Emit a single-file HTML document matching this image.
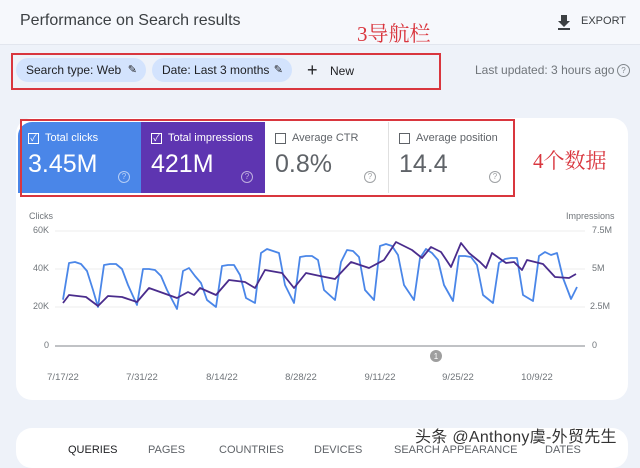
<!DOCTYPE html>
<html><head><meta charset="utf-8"><style>
body{margin:0;width:640px;height:455px;overflow:hidden;background:#eef2f9;font-family:"Liberation Sans","Noto Sans CJK SC",sans-serif;position:relative}
.a{position:absolute;white-space:nowrap}
.hdr{position:absolute;left:0;top:0;width:640px;height:44px;background:#f6f8fc;border-bottom:1px solid #e2e6ee}
.chip{position:absolute;top:58px;height:24px;border-radius:12px;background:#d3e3fd;font-size:12px;color:#202124;line-height:24px;padding-left:10px;box-sizing:border-box}
.card{position:absolute;background:#fff;border-radius:16px}
.tile{position:absolute;top:122px;height:71px;width:124px;box-sizing:border-box;padding:10px 0 0 10px}
.tile .l{font-size:11px;display:flex;align-items:center}
.cb{width:9px;height:9px;border:1px solid currentColor;margin-right:6px;display:inline-block;font-size:9px;line-height:9px;text-align:center}
.tile .n{font-size:25px;margin-top:6px}
.q{position:absolute;right:12px;bottom:10px;width:10px;height:10px;border:1px solid currentColor;border-radius:50%;font-size:8px;line-height:10px;text-align:center;opacity:.6}
.red{color:#d9363e;font-family:"Liberation Serif","Noto Serif CJK SC",serif}
.ax{font-size:9px;color:#70757a}
.tab{position:absolute;top:444px;font-size:11px;color:#5f6368}
</style></head><body>
<div class="hdr"></div>
<div class="a" style="left:20px;top:12px;font-size:16px;color:#3c4043">Performance on Search results</div>
<div class="a red" style="left:357px;top:18px;font-size:21px">3导航栏</div>
<svg class="a" style="left:557px;top:14px" width="14" height="16"><path d="M4 1h6v6h3l-6 6-6-6h3z" fill="#3c4043"/><rect x="1" y="14" width="12" height="2" fill="#3c4043"/></svg>
<div class="a" style="left:581px;top:15px;font-size:11px;color:#3c4043">EXPORT</div>

<div class="chip" style="left:16px;width:130px">Search type: Web <span style="position:absolute;right:9px;font-size:11px">✎</span></div>
<div class="chip" style="left:152px;width:140px">Date: Last 3 months <span style="position:absolute;right:9px;font-size:11px">✎</span></div>
<div class="a" style="left:307px;top:60px;font-size:18px;color:#202124">+</div>
<div class="a" style="left:330px;top:64px;font-size:12px;color:#202124">New</div>
<div class="a" style="left:11px;top:53px;width:426px;height:33px;border:2px solid #d9363e"></div>
<div class="a" style="left:475px;top:63px;font-size:12px;color:#70757a">Last updated: 3 hours ago</div>
<div class="a" style="left:617px;top:64px;width:11px;height:11px;border:1px solid #80868b;border-radius:50%;font-size:8px;line-height:11px;text-align:center;color:#80868b">?</div>

<div class="card" style="left:16px;top:118px;width:612px;height:282px"></div>
<div class="tile" style="left:18px;background:#4a86e8;color:#fff;border-top-left-radius:14px"><div class="l"><span class="cb">✓</span>Total clicks</div><div class="n">3.45M</div><div class="q">?</div></div>
<div class="tile" style="left:141px;background:#5e35b1;color:#fff"><div class="l"><span class="cb">✓</span>Total impressions</div><div class="n">421M</div><div class="q">?</div></div>
<div class="tile" style="left:265px;color:#5f6368;border-right:1px solid #e0e0e0"><div class="l"><span class="cb"></span>Average CTR</div><div class="n">0.8%</div><div class="q">?</div></div>
<div class="tile" style="left:389px;color:#5f6368"><div class="l"><span class="cb"></span>Average position</div><div class="n">14.4</div><div class="q">?</div></div>
<div class="a" style="left:20px;top:119px;width:491px;height:74px;border:2px solid #d9363e"></div>
<div class="a red" style="left:533px;top:145px;font-size:21px">4个数据</div>

<div class="a ax" style="left:29px;top:211px">Clicks</div>
<div class="a ax" style="left:566px;top:211px">Impressions</div>
<div class="a ax" style="left:33px;top:225px">60K</div>
<div class="a ax" style="left:33px;top:263px">40K</div>
<div class="a ax" style="left:33px;top:301px">20K</div>
<div class="a ax" style="left:44px;top:340px">0</div>
<div class="a ax" style="left:592px;top:225px">7.5M</div>
<div class="a ax" style="left:592px;top:263px">5M</div>
<div class="a ax" style="left:590px;top:301px">2.5M</div>
<div class="a ax" style="left:592px;top:340px">0</div>
<svg class="a" style="left:0;top:0" width="640" height="455">
<g stroke="#eeeeee" stroke-width="1"><line x1="55" y1="231" x2="585" y2="231"/><line x1="55" y1="269" x2="585" y2="269"/><line x1="55" y1="307" x2="585" y2="307"/></g>
<line x1="55" y1="346" x2="585" y2="346" stroke="#80868b" stroke-width="1"/>
<polyline fill="none" stroke="#4a86e8" stroke-width="1.8" stroke-linejoin="round" points="63,299.7 69,263 75,262 81,264 87,271 93,290 98,307 104,265 110,264 116,264 122,269 128,285 137,305 143,269 149,269 155,270 161,276 167,290 177,309 183,271 189,268 195,276 201,283 207,300 216,307 222,266 228,265 234,265 240,275 246,298 255,303 261,253 267,249 273,251 279,253 285,285 294,303 300,257 306,256 312,256 318,260 324,290 335,300 341,262 347,250 353,251 359,257 365,290 374,300 380,246 386,244 392,246 398,255 404,285 414,300 420,258 426,249 432,253 438,260 444,285 453,301 459,256 465,256 471,257 477,265 483,295 493,303 499,263 505,259 511,258 517,258 523,295 533,301 539,256 545,252 551,255 557,253 563,278 571,299 577,287"/>
<polyline fill="none" stroke="#4a2c8c" stroke-width="1.8" stroke-linejoin="round" points="63,303 69,295 86,297 98,306 108,296 122,297 137,302 149,288 163,293 177,298 188,292 194,295 200,288 216,295 229,280 245,282 255,288 265,270 282,273 294,288 306,273 320,276 335,279 351,262 369,268 384,260 396,242 412,250 422,258 431,247 441,252 451,267 461,243 469,253 480,262 486,268 492,253 506,263 514,262 522,270 527,260 543,264 555,277 569,278 576,274"/>
<circle cx="436" cy="356" r="6" fill="#9e9e9e"/><text x="436" y="359" font-size="8" fill="#fff" text-anchor="middle" font-family="Liberation Sans">1</text>
<g font-size="9.5" fill="#70757a" text-anchor="middle" font-family="Liberation Sans"><text x="63" y="380">7/17/22</text><text x="142" y="380">7/31/22</text><text x="222" y="380">8/14/22</text><text x="301" y="380">8/28/22</text><text x="380" y="380">9/11/22</text><text x="458" y="380">9/25/22</text><text x="537" y="380">10/9/22</text></g>
</svg>

<div class="card" style="left:16px;top:428px;width:612px;height:40px"></div>
<div class="tab" style="left:68px;color:#202124">QUERIES</div>
<div class="tab" style="left:148px">PAGES</div>
<div class="tab" style="left:219px">COUNTRIES</div>
<div class="tab" style="left:314px">DEVICES</div>
<div class="tab" style="left:394px">SEARCH APPEARANCE</div>
<div class="tab" style="left:545px">DATES</div>
<div class="a" style="left:415px;top:423px;font-size:16px;letter-spacing:0.3px;color:#333;text-shadow:0 0 2px #fff">头条 @Anthony虞-外贸先生</div>
</body></html>
